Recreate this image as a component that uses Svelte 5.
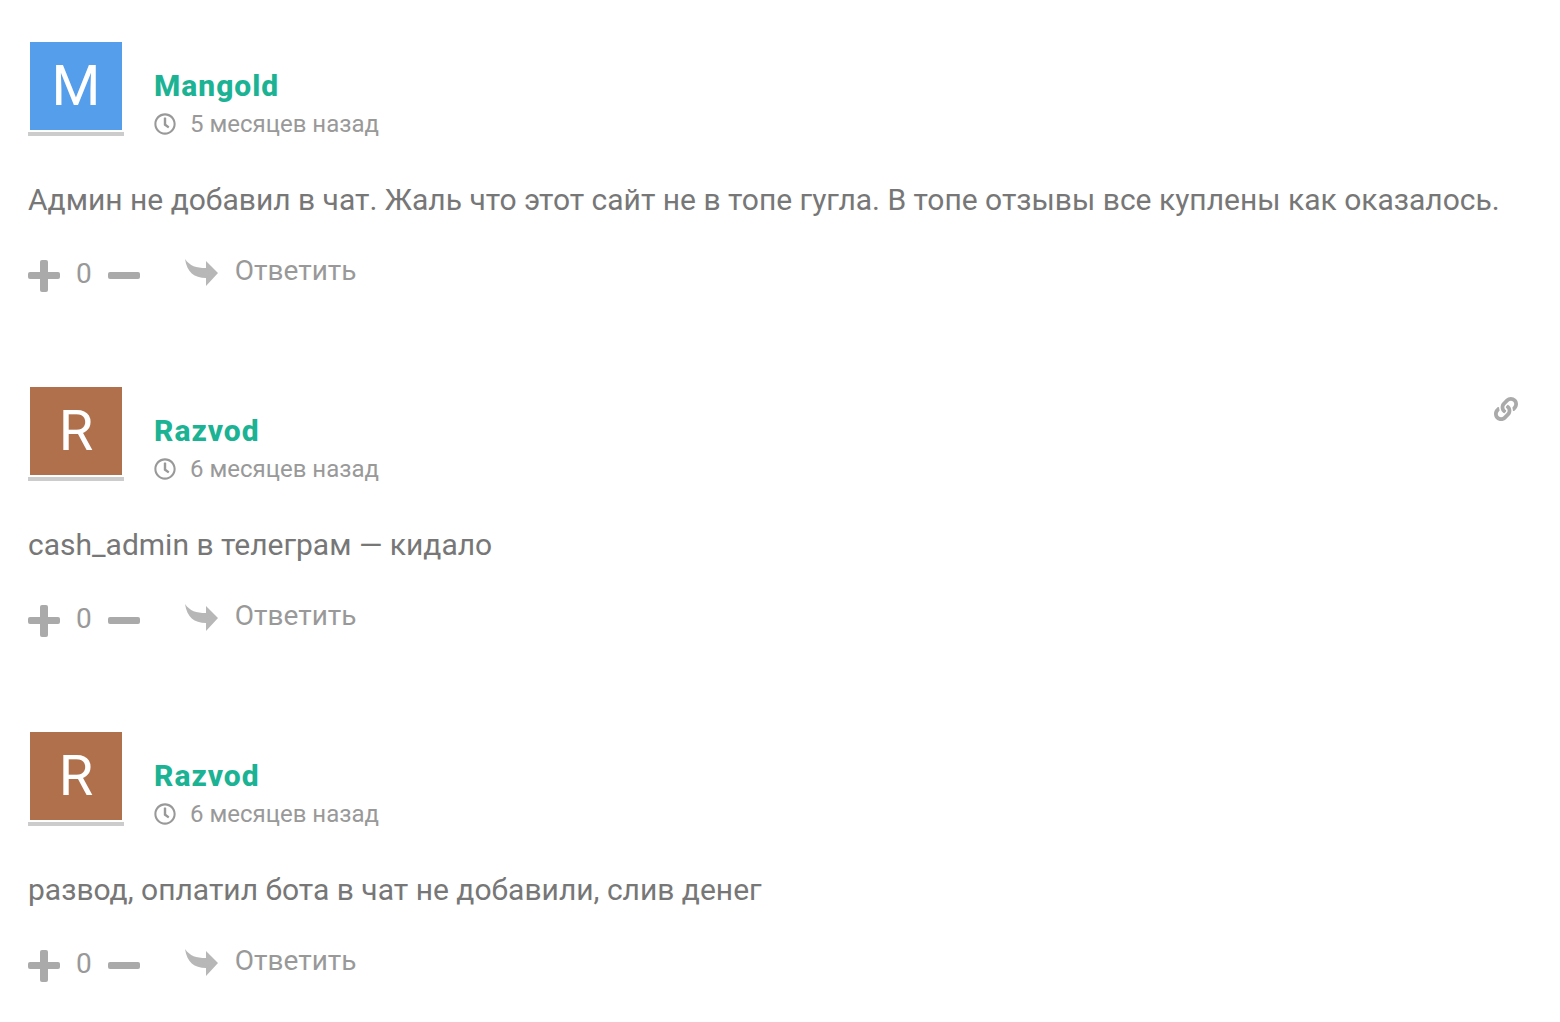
<script lang="ts">
  interface Comment {
    id: number;
    author: string;
    color: string;
    date: string;
    text: string;
    votes: number;
    showLink?: boolean;
  }

  let comments: Comment[] = $state([
    {
      id: 1,
      author: 'Mangold',
      color: '#559eeb',
      date: '5 месяцев назад',
      text: 'Админ не добавил в чат. Жаль что этот сайт не в топе гугла. В топе отзывы все куплены как оказалось.',
      votes: 0
    },
    {
      id: 2,
      author: 'Razvod',
      color: '#b0704c',
      date: '6 месяцев назад',
      text: 'cash_admin в телеграм — кидало',
      votes: 0,
      showLink: true
    },
    {
      id: 3,
      author: 'Razvod',
      color: '#b0704c',
      date: '6 месяцев назад',
      text: 'развод, оплатил бота в чат не добавили, слив денег',
      votes: 0
    }
  ]);
</script>

<main class="thread">
  {#each comments as comment (comment.id)}
    <article class="comment" id="comment-{comment.id}">
      <header class="comment-header">
        <div class="avatar" aria-hidden="true">
          <div class="avatar-letter" style="background: {comment.color}">{comment.author[0]}</div>
        </div>
        <div class="meta">
          <div class="author">{comment.author}</div>
          <div class="date">
            <svg class="clock" viewBox="0 0 512 512" aria-hidden="true">
              <path d="M256 8C119 8 8 119 8 256s111 248 248 248 248-111 248-248S393 8 256 8zm0 448c-110.500 0-200-89.500-200-200S145.500 56 256 56s200 89.500 200 200-89.500 200-200 200zm61.800-104.400l-84.900-61.700c-3.100-2.300-4.900-5.900-4.900-9.700V116c0-6.600 5.400-12 12-12h32c6.600 0 12 5.400 12 12v141.700l66.800 48.600c5.400 3.900 6.500 11.400 2.600 16.800L334.600 349c-3.900 5.300-11.400 6.500-16.800 2.600z" />
            </svg>
            <time>{comment.date}</time>
          </div>
        </div>
        {#if comment.showLink}
          <a class="permalink" href="#comment-{comment.id}" aria-label="Ссылка на комментарий">
            <svg viewBox="0 0 512 512" aria-hidden="true">
              <path d="M326.612 185.391c59.747 59.809 58.927 155.698.36 214.590-.11.120-.240.250-.360.370l-67.200 67.200c-59.270 59.270-155.699 59.262-214.960 0-59.270-59.260-59.270-155.700 0-214.960l37.106-37.106c9.840-9.840 26.786-3.300 27.294 10.606.648 17.722 3.826 35.527 9.690 52.721 1.986 5.822.567 12.262-3.783 16.612l-13.087 13.087c-28.026 28.026-28.905 73.660-1.155 101.960 28.024 28.579 74.086 28.749 102.325.510l67.200-67.190c28.191-28.191 28.073-73.757 0-101.830-3.701-3.694-7.429-6.564-10.341-8.569a16.037 16.037 0 0 1-6.947-12.606c-.396-10.567 3.348-21.456 11.698-29.806l21.054-21.055c5.521-5.521 14.182-6.199 20.584-1.731a152.482 152.482 0 0 1 20.522 17.197zM467.547 44.449c-59.261-59.262-155.690-59.270-214.960 0l-67.200 67.200c-.120.120-.250.250-.360.370-58.566 58.892-59.387 154.781.360 214.590a152.454 152.454 0 0 0 20.521 17.196c6.402 4.468 15.064 3.789 20.584-1.731l21.054-21.055c8.350-8.350 12.094-19.239 11.698-29.806a16.037 16.037 0 0 0-6.947-12.606c-2.912-2.005-6.640-4.875-10.341-8.569-28.073-28.073-28.191-73.639 0-101.830l67.200-67.190c28.239-28.239 74.300-28.069 102.325.510 27.750 28.300 26.872 73.934-1.155 101.960l-13.087 13.087c-4.350 4.350-5.769 10.790-3.783 16.612 5.864 17.194 9.042 34.999 9.690 52.721.509 13.906 17.454 20.446 27.294 10.606l37.106-37.106c59.271-59.259 59.271-155.699.001-214.959z" />
            </svg>
          </a>
        {/if}
      </header>

      <p class="text">{comment.text}</p>

      <footer class="actions">
        <div class="votes">
          <button class="vote" aria-label="Нравится" onclick={() => comment.votes++}>
            <svg viewBox="0 0 32 32" aria-hidden="true">
              <rect x="0" y="12" width="32" height="7" rx="2" />
              <rect x="12" y="0" width="8" height="32" rx="2" />
            </svg>
          </button>
          <span class="count">{comment.votes}</span>
          <button class="vote" aria-label="Не нравится" onclick={() => comment.votes--}>
            <svg viewBox="0 0 32 32" aria-hidden="true">
              <rect x="0" y="12" width="32" height="7" rx="2" />
            </svg>
          </button>
        </div>
        <button class="reply">
          <svg viewBox="0 0 34 28" aria-hidden="true">
            <path d="M0 0C5 7 11 9 21 9V2L33 14 21 27V19C9 19 2 13 0 0Z" />
          </svg>
          Ответить
        </button>
      </footer>
    </article>
  {/each}
</main>

<style>
  :global(body) {
    margin: 0;
    background: #fff;
  }

  .thread {
    display: flex;
    flex-direction: column;
    gap: 89px;
    padding: 40px 42px 30px 28px;
    font-family: Roboto, 'Liberation Sans', sans-serif;
    color: #999;
  }

  .comment-header {
    display: flex;
    align-items: flex-start;
    gap: 30px;
  }

  .avatar {
    width: 92px;
    padding: 2px;
    border-bottom: 4px solid #ccc;
    flex-shrink: 0;
  }

  .avatar-letter {
    height: 88px;
    line-height: 88px;
    font-size: 56px;
    text-align: center;
    color: #fff;
  }

  .meta {
    flex: 1;
    padding-top: 26px;
  }

  .author {
    font-size: 30px;
    line-height: 40px;
    font-weight: 800;
    letter-spacing: 1px;
    color: #1bb394;
  }

  .date {
    display: flex;
    align-items: center;
    gap: 14px;
    font-size: 24px;
    line-height: 36px;
  }

  .clock {
    width: 22px;
    height: 22px;
    fill: #999;
  }

  .permalink {
    padding-top: 12px;
  }

  .permalink svg {
    display: block;
    width: 24px;
    height: 24px;
    fill: #aaa;
  }

  .text {
    margin: 34px 0 28px;
    font-size: 30px;
    line-height: 48px;
    color: #777;
  }

  .actions {
    display: flex;
    align-items: flex-start;
    gap: 45px;
  }

  .votes {
    display: flex;
    align-items: flex-start;
    gap: 16px;
    font-size: 28px;
    line-height: 44px;
  }

  button {
    padding: 0;
    border: none;
    background: none;
    font: inherit;
    color: inherit;
    cursor: pointer;
  }

  .vote {
    padding-top: 8px;
  }

  .vote svg {
    display: block;
    width: 32px;
    height: 32px;
    fill: #aaa;
  }

  .reply {
    display: flex;
    align-items: center;
    gap: 16px;
    font-size: 28px;
    line-height: 38px;
  }

  .reply svg {
    width: 34px;
    height: 28px;
    padding-top: 4px;
    fill: #b7b7b7;
  }

  .vote:hover svg,
  .reply:hover svg,
  .permalink:hover svg {
    fill: #777;
  }
</style>
